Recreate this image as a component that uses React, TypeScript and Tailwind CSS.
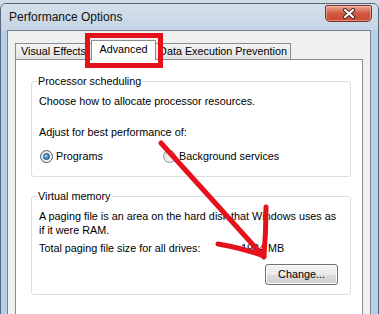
import React from "react";

function CloseButton() {
  return (
    <div className="mr-[6px] mt-[1px] h-[17px] w-[47px] rounded-t-[2px] rounded-b-[5px] border border-[#7a3426] bg-gradient-to-b from-[#e9a796] via-[#d2573f] to-[#c94a32] flex items-center justify-center shadow-[inset_0_0_0_1px_rgba(255,210,200,0.45)]">
      <svg width="14" height="11" viewBox="0 0 14 11">
        <path d="M3 2 L11 9 M11 2 L3 9" stroke="#4a2a24" strokeWidth="4.2" strokeLinecap="round" />
        <path d="M3 2 L11 9 M11 2 L3 9" stroke="#ffffff" strokeWidth="2.2" strokeLinecap="round" />
      </svg>
    </div>
  );
}

function Radio({ checked }: { checked?: boolean }) {
  return (
    <span
      className={
        checked
          ? "flex h-[13px] w-[13px] shrink-0 items-center justify-center rounded-full border border-[#4b5f73] bg-gradient-to-br from-[#d9dde2] to-[#f7f8f9]"
          : "flex h-[13px] w-[13px] shrink-0 items-center justify-center rounded-full border border-[#8f9296] bg-gradient-to-br from-[#dcdcdc] to-[#f9f9f9]"
      }
    >
      {checked && (
        <span className="h-[7px] w-[7px] rounded-full border border-[#1c4f78] bg-[radial-gradient(circle_at_35%_35%,#a6dcf7,#3e8fc7_55%,#17507f)]" />
      )}
    </span>
  );
}

export default function App() {
  return (
    <div className="relative h-[314px] w-[379px] overflow-hidden bg-[#d3dbe3] font-['Liberation_Sans',Arial,sans-serif] text-[10.8px] text-black">
      {/* WINDOW */}
      <div className="mt-[3px] flex h-[330px] flex-col rounded-t-[6px] border border-[#56677a] bg-[#b8cfe8]">
        {/* TITLE BAR */}
        <div className="flex h-[26px] shrink-0 items-start justify-between rounded-t-[5px] bg-gradient-to-b from-[#d4dfea] to-[#c6d5e5]">
          <span className="ml-[8px] mt-[6px] text-[12px] leading-[15px] text-[#111]">
            Performance Options
          </span>
          <CloseButton />
        </div>

        {/* CLIENT AREA */}
        <div className="ml-[6px] mr-[7px] min-h-0 flex-1 overflow-hidden border border-b-0 border-[#74828f] bg-[#f0f0f0] px-[7px] pt-[9px]">
          {/* TABS */}
          <div className="flex h-[19px] items-end">
            <div className="flex h-[16px] w-[77px] items-center justify-center border border-b-0 border-[#898c95] bg-gradient-to-b from-[#f4f4f4] to-[#e3e3e3] leading-[15px]">
              Visual Effects
            </div>
            <div className="relative z-10 -mb-px -ml-px flex h-[20px] w-[65px] items-start justify-center border border-b-0 border-[#898c95] bg-white pt-[1px] leading-[15px]">
              Advanced
            </div>
            <div className="-ml-px flex h-[16px] w-[136px] items-center justify-center border border-b-0 border-[#898c95] bg-gradient-to-b from-[#f4f4f4] to-[#e3e3e3] leading-[15px]">
              Data Execution Prevention
            </div>
          </div>

          {/* PANEL */}
          <div className="h-[280px] border border-[#898c95] bg-white">
            <fieldset className="ml-[15px] mt-[14px] h-[103px] w-[320px] rounded-[3px] border border-[#d5dfe5] px-[7px]">
              <legend className="-ml-[2px] px-[1px] leading-[15px]">Processor scheduling</legend>
              <p className="pt-[5px] leading-[15px]">Choose how to allocate processor resources.</p>
              <p className="mt-[16px] leading-[15px]">Adjust for best performance of:</p>
              <div className="mt-[9px] flex h-[15px] items-center leading-[15px]">
                <div className="ml-[1px] flex w-[123px] items-center">
                  <Radio checked />
                  <span className="ml-[3px]">Programs</span>
                </div>
                <Radio />
                <span className="ml-[3px]">Background services</span>
              </div>
            </fieldset>

            <fieldset className="ml-[15px] mt-[12px] h-[106px] w-[320px] rounded-[3px] border border-[#d5dfe5] px-[7px]">
              <legend className="-ml-[2px] px-[1px] leading-[15px]">Virtual memory</legend>
              <p className="pt-[5px] leading-[14px]">
                A paging file is an area on the hard disk that Windows uses as
                <br />
                if it were RAM.
              </p>
              <div className="mt-[4px] flex leading-[15px]">
                <span className="w-[202px]">Total paging file size for all drives:</span>
                <span>1984 MB</span>
              </div>
              <div className="mt-[8px] flex justify-end pr-[5px]">
                <button className="flex h-[21px] w-[73px] items-center justify-center rounded-[3px] border border-[#707070] bg-[linear-gradient(#f2f2f2,#ebebeb_50%,#dddddd_50%,#cfcfcf)] leading-[15px] shadow-[inset_0_0_0_1px_#fcfcfc]">
                  Change...
                </button>
              </div>
            </fieldset>
          </div>
        </div>
      </div>

      {/* RED ANNOTATIONS */}
      <svg
        className="pointer-events-none absolute inset-0"
        width="379"
        height="314"
        viewBox="0 0 379 314"
      >
        <rect x="87.5" y="35.5" width="73" height="30" fill="none" stroke="#e5121c" strokeWidth="5" />
        <path d="M161 143 L264 257" stroke="#e5121c" strokeWidth="5" strokeLinecap="round" fill="none" />
        <path d="M266 207 Q266 232 264 256" stroke="#e5121c" strokeWidth="5" strokeLinecap="round" fill="none" />
        <path d="M218 244 Q242 248 264 256" stroke="#e5121c" strokeWidth="5" strokeLinecap="round" fill="none" />
      </svg>
    </div>
  );
}
